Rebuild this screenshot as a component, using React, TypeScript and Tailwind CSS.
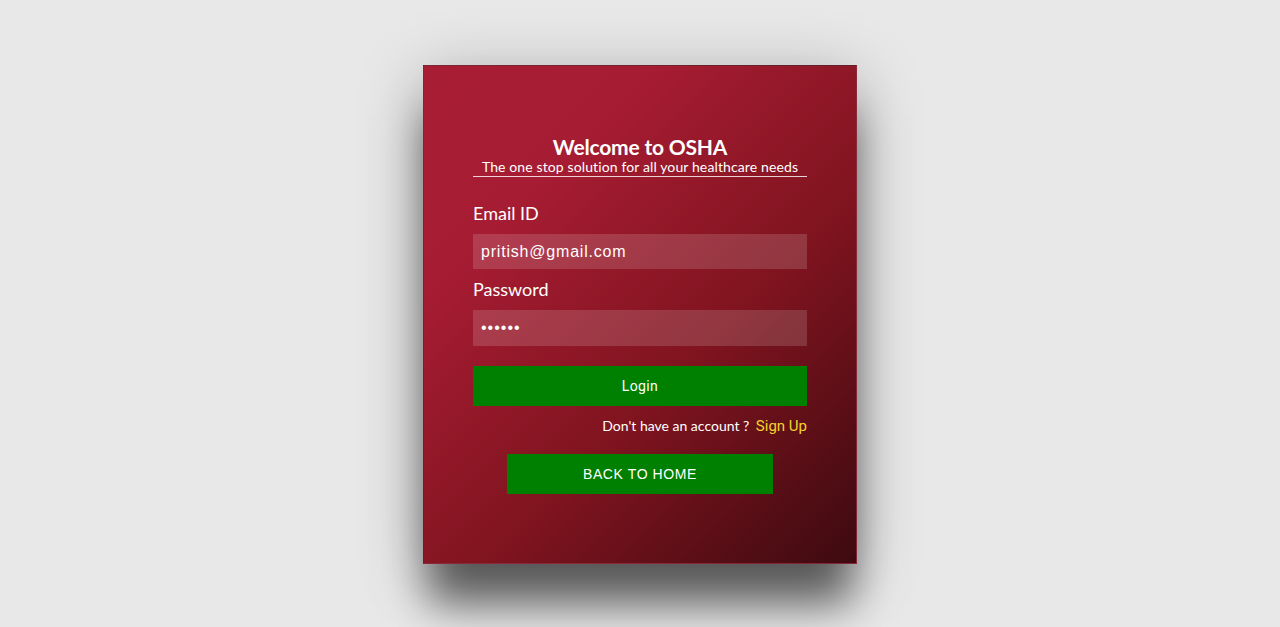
import React, { useState } from 'react';

const raleway = { fontFamily: 'Lato, "Open Sans", sans-serif' };

export default function App() {
  const [email, setEmail] = useState('pritish@gmail.com');
  const [password, setPassword] = useState('123456');

  return (
    <div className="min-h-screen w-full bg-[#e8e8e8] flex justify-center pt-[65px]">
      <div className="w-[434px] h-[499px] bg-[linear-gradient(135deg,#a81d33_0%,#a61c32_25%,#80141f_60%,#3d0a10_100%)] shadow-[0_45px_40px_-5px_rgba(0,0,0,0.55),0_10px_60px_rgba(0,0,0,0.25)] border border-[#7a3040]/60 px-[49px] pt-[69px]">
        <div className="text-center border-b border-white/80 pb-[1px]" style={raleway}>
          <h1 className="text-[21px] leading-[24px] font-bold text-white tracking-[-0.2px]">Welcome to OSHA</h1>
          <p className="text-[14px] leading-[16px] text-white tracking-[0.12px]">The one stop solution for all your healthcare needs</p>
        </div>

        <form className="mt-[25px]" onSubmit={(e) => e.preventDefault()}>
          <label className="block text-[18px] leading-[23px] text-white" style={raleway}>Email ID</label>
          <input
            type="email"
            value={email}
            onChange={(e) => setEmail(e.target.value)}
            className="mt-[9px] w-full h-[35px] bg-white/15 px-[8px] text-[16px] text-white tracking-[0.8px] outline-none font-['Liberation_Sans',Arial,sans-serif]"
          />

          <label className="block mt-[8px] text-[18px] leading-[24px] text-white" style={raleway}>Password</label>
          <input
            type="password"
            value={password}
            onChange={(e) => setPassword(e.target.value)}
            className="mt-[9px] w-full h-[36px] bg-white/15 px-[8px] text-[16px] text-white tracking-[1px] outline-none font-['Liberation_Sans',Arial,sans-serif]"
          />

          <button
            type="submit"
            className="mt-[20px] w-full h-[40px] bg-[#008000] text-white text-[14px] font-normal tracking-[0.4px] font-['Roboto',sans-serif]"
          >
            Login
          </button>

          <p className="mt-[10px] text-right text-[14px] leading-[20px] text-white" style={raleway}>
            Don't have an account ?{' '}
            <a href="#" className="ml-[3px] text-[#f5d32a] font-['Roboto',sans-serif] text-[15px]">Sign Up</a>
          </p>
        </form>

        <div className="flex justify-center mt-[18px]">
          <button className="w-[266px] h-[40px] bg-[#008000] text-white text-[14px] tracking-[0.6px] font-['Liberation_Sans',Arial,sans-serif]">
            BACK TO HOME
          </button>
        </div>
      </div>
    </div>
  );
}
